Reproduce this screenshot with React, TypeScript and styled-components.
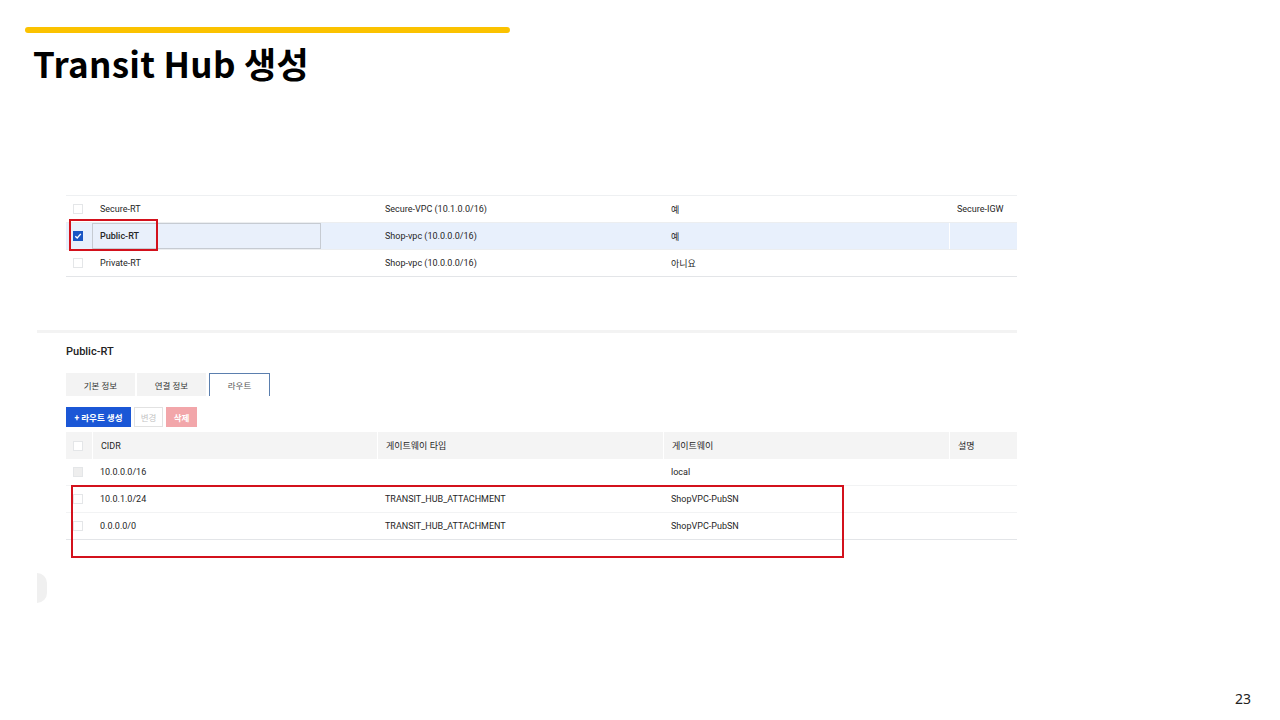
import React from "react";
import styled, { createGlobalStyle } from "styled-components";

const GlobalStyle = createGlobalStyle`
  html, body {
    margin: 0;
    padding: 0;
    background: #ffffff;
  }
  * {
    box-sizing: border-box;
  }
`;

const FONT = `Roboto, "Noto Sans CJK KR", sans-serif`;
const GRID = "26px 285px 286px 286px 68px";

const Slide = styled.div`
  position: relative;
  width: 1280px;
  height: 720px;
  overflow: hidden;
  background: #fff;
  padding: 27px 0 0 25px;
  display: flex;
  flex-direction: column;
`;

const AccentBar = styled.div`
  width: 485px;
  height: 6px;
  border-radius: 3px;
  background: #fbc200;
`;

const Title = styled.h1`
  margin: 8px 0 0 8px;
  font-family: "Noto Sans CJK KR", "Noto Sans", sans-serif;
  font-weight: 700;
  font-size: 35px;
  line-height: 44px;
  color: #000;
  letter-spacing: 0.3px;
`;

const Capture = styled.section`
  margin: 97px 0 0 12px;
  width: 980px;
  display: flex;
  flex-direction: column;
  font-family: ${FONT};
  color: #262626;
`;

const TableBlock = styled.div`
  position: relative;
  margin-left: 29px;
  width: 951px;
`;

const CutRow = styled.div`
  height: 14px;
  border-bottom: 1px solid #eef0f2;
`;

const Row = styled.div<{ $selected?: boolean; $line?: string }>`
  display: grid;
  grid-template-columns: ${GRID};
  height: 27px;
  align-items: center;
  border-bottom: 1px solid ${(p) => p.$line || "#eceef0"};
  background: ${(p) => (p.$selected ? "#e8f0fc" : "#fff")};
  font-size: 9px;
`;

const HeadRow = styled(Row)`
  background: #f4f4f4;
  border-bottom: none;
`;

const Cell = styled.div<{ $divider?: boolean }>`
  height: 100%;
  display: flex;
  align-items: center;
  padding-left: 8px;
  white-space: nowrap;
  border-left: ${(p) => (p.$divider ? "1px solid #fff" : "none")};
`;

const CheckCell = styled.div`
  height: 100%;
  display: flex;
  align-items: center;
  padding-left: 7px;
`;

const Check = styled.div<{ $checked?: boolean; $dim?: boolean }>`
  width: 10px;
  height: 10px;
  border: 1px solid ${(p) => (p.$checked ? "#1a56c4" : "#e4e6e8")};
  background: ${(p) => (p.$checked ? "#1a56c4" : p.$dim ? "#eeeeee" : "#fff")};
  display: flex;
  align-items: center;
  justify-content: center;
`;

const NameBox = styled.div`
  height: 26px;
  margin-right: 56px;
  margin-top: -1px;
  display: flex;
  align-items: center;
  padding-left: 7px;
  border: 1px solid #c6cbd2;
  background: #e9f0fb;
  font-weight: 500;
`;

const Highlight = styled.div<{ $l: number; $t: number; $w: number; $h: number }>`
  position: absolute;
  left: ${(p) => p.$l}px;
  top: ${(p) => p.$t}px;
  width: ${(p) => p.$w}px;
  height: ${(p) => p.$h}px;
  border: 2px solid #d3111c;
  pointer-events: none;
`;

const Divider = styled.div`
  margin-top: 53px;
  height: 3px;
  background: #f3f3f3;
`;

const DetailTitle = styled.div`
  margin: 12px 0 0 29px;
  font-size: 11px;
  font-weight: 500;
  line-height: 14px;
  color: #222;
`;

const Tabs = styled.div`
  margin: 14px 0 0 29px;
  display: flex;
  gap: 2px;
  height: 23px;
`;

const Tab = styled.div<{ $active?: boolean; $w: number }>`
  width: ${(p) => p.$w}px;
  display: flex;
  align-items: center;
  justify-content: center;
  font-size: 8.5px;
  color: ${(p) => (p.$active ? "#555" : "#333")};
  background: ${(p) => (p.$active ? "#fff" : "#f3f3f3")};
  border: ${(p) => (p.$active ? "1px solid #5b7fae" : "none")};
  border-bottom: none;
  margin-left: ${(p) => (p.$active ? "1px" : "0")};
`;

const Toolbar = styled.div`
  margin: 11px 0 0 29px;
  display: flex;
  gap: 3px;
  height: 20px;
`;

const Button = styled.div<{ $kind: "primary" | "plain" | "danger"; $w: number }>`
  width: ${(p) => p.$w}px;
  display: flex;
  align-items: center;
  justify-content: center;
  font-size: 8.5px;
  font-weight: ${(p) => (p.$kind === "plain" ? 400 : 700)};
  color: ${(p) => (p.$kind === "plain" ? "#c4c4c4" : "#fff")};
  background: ${(p) =>
    p.$kind === "primary" ? "#1b57d6" : p.$kind === "danger" ? "#f2a6aa" : "#fff"};
  border: ${(p) => (p.$kind === "plain" ? "1px solid #e2e2e2" : "none")};
`;

const RouteTable = styled(TableBlock)`
  margin-top: 5px;
`;

const ScrollNub = styled.div`
  margin-top: 33px;
  width: 10px;
  height: 30px;
  border-radius: 0 15px 15px 0;
  background: #f0f0f0;
`;

const PageNumber = styled.div`
  position: absolute;
  right: 29px;
  bottom: 12px;
  font-family: "Noto Sans", sans-serif;
  font-size: 14px;
  color: #222;
`;

const Tick = () => (
  <svg width="8" height="8" viewBox="0 0 8 8">
    <path d="M1.3 4.2 L3.2 6 L6.8 1.9" fill="none" stroke="#fff" strokeWidth="1.4" />
  </svg>
);

const topRows = [
  { name: "Secure-RT", vpc: "Secure-VPC (10.1.0.0/16)", main: "예", igw: "Secure-IGW" },
  { name: "Public-RT", vpc: "Shop-vpc (10.0.0.0/16)", main: "예", igw: "", selected: true },
  { name: "Private-RT", vpc: "Shop-vpc (10.0.0.0/16)", main: "아니요", igw: "" },
];

const routes = [
  { cidr: "10.0.0.0/16", type: "", gw: "local", dim: true },
  { cidr: "10.0.1.0/24", type: "TRANSIT_HUB_ATTACHMENT", gw: "ShopVPC-PubSN" },
  { cidr: "0.0.0.0/0", type: "TRANSIT_HUB_ATTACHMENT", gw: "ShopVPC-PubSN" },
];

const App: React.FC = () => {
  return (
    <Slide>
      <GlobalStyle />
      <AccentBar />
      <Title>Transit Hub 생성</Title>
      <Capture>
        <TableBlock>
          <CutRow />
          {topRows.map((r, i) => (
            <Row
              key={r.name}
              $selected={r.selected}
              $line={i === topRows.length - 1 ? "#e3e5e8" : undefined}
            >
              <CheckCell>
                <Check $checked={r.selected}>{r.selected && <Tick />}</Check>
              </CheckCell>
              {r.selected ? <NameBox>{r.name}</NameBox> : <Cell>{r.name}</Cell>}
              <Cell>{r.vpc}</Cell>
              <Cell>{r.main}</Cell>
              <Cell $divider={r.selected}>{r.igw}</Cell>
            </Row>
          ))}
          <Highlight $l={3} $t={37} $w={89} $h={32} />
        </TableBlock>

        <Divider />
        <DetailTitle>Public-RT</DetailTitle>
        <Tabs>
          <Tab $w={69}>기본 정보</Tab>
          <Tab $w={69}>연결 정보</Tab>
          <Tab $w={61} $active>
            라우트
          </Tab>
        </Tabs>
        <Toolbar>
          <Button $kind="primary" $w={65}>
            + 라우트 생성
          </Button>
          <Button $kind="plain" $w={29}>
            변경
          </Button>
          <Button $kind="danger" $w={31}>
            삭제
          </Button>
        </Toolbar>

        <RouteTable>
          <HeadRow>
            <CheckCell>
              <Check />
            </CheckCell>
            <Cell $divider>CIDR</Cell>
            <Cell $divider>게이트웨이 타입</Cell>
            <Cell $divider>게이트웨이</Cell>
            <Cell $divider>설명</Cell>
          </HeadRow>
          {routes.map((r, i) => (
            <Row
              key={r.cidr}
              $line={i === routes.length - 1 ? "#e3e5e8" : "#f2f3f4"}
            >
              <CheckCell>
                <Check $dim={r.dim} />
              </CheckCell>
              <Cell>{r.cidr}</Cell>
              <Cell>{r.type}</Cell>
              <Cell>{r.gw}</Cell>
              <Cell />
            </Row>
          ))}
          <Highlight $l={5} $t={53} $w={773} $h={73} />
        </RouteTable>
        <ScrollNub />
      </Capture>
      <PageNumber>23</PageNumber>
    </Slide>
  );
};

export default App;
